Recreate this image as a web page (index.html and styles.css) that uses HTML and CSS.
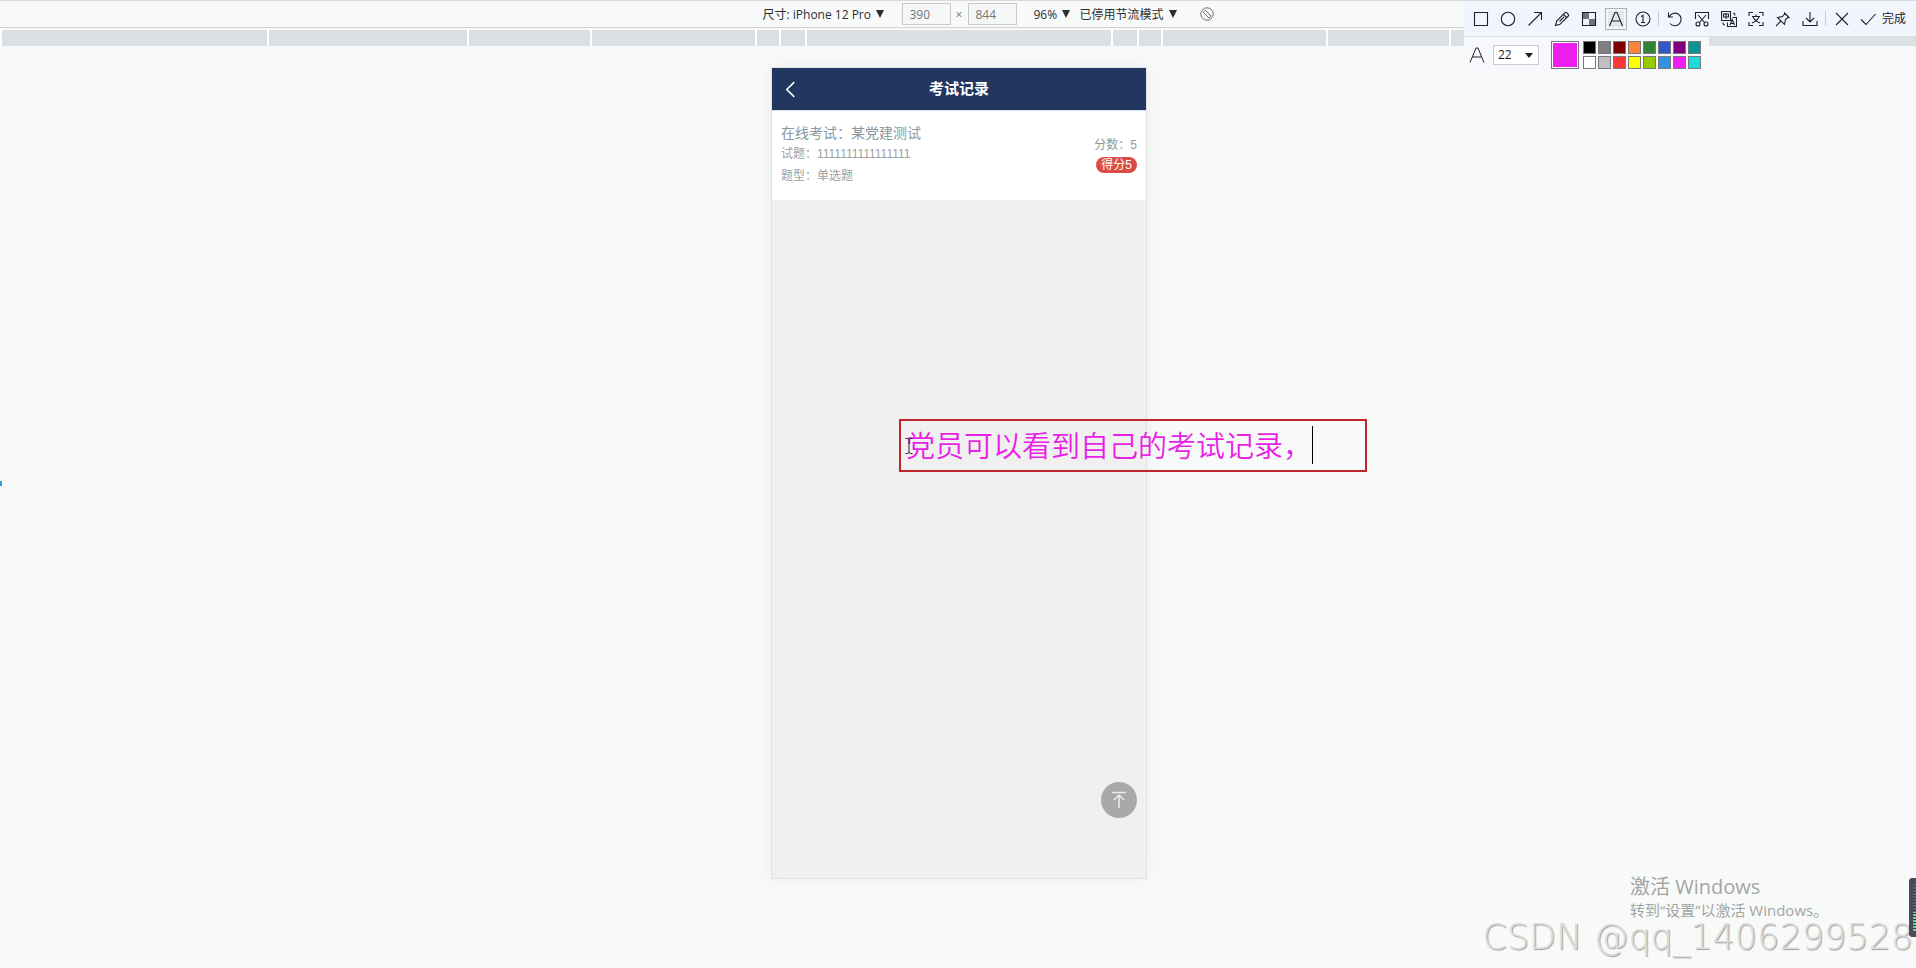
FILE: index.html
```html
<!DOCTYPE html>
<html lang="zh-CN">
<head>
<meta charset="utf-8">
<title>考试记录</title>
<link rel="stylesheet" href="styles.css">
</head>
<body>
<header class="device-bar">
  <label class="picker"><select aria-label="尺寸"><option>尺寸: iPhone 12 Pro</option></select><svg class="caret" viewBox="0 0 8 8"><path d="M0 0h8L4 8z"/></svg></label>
  <div class="dims">
    <input class="dim" type="text" value="390" aria-label="宽度">
    <span class="times">×</span>
    <input class="dim" type="text" value="844" aria-label="高度">
  </div>
  <label class="picker"><select aria-label="缩放"><option>96%</option></select><svg class="caret" viewBox="0 0 8 8"><path d="M0 0h8L4 8z"/></svg></label>
  <label class="picker picker-throttle"><select aria-label="节流"><option>已停用节流模式</option></select><svg class="caret" viewBox="0 0 8 8"><path d="M0 0h8L4 8z"/></svg></label>
  <button class="rotate" aria-label="旋转"><svg viewBox="0 0 14 14"><circle cx="7" cy="7" r="6.2"/><path d="M3.2 5.2L9 11M5.2 3.2L11 9M3.2 5.2l2-2M9 11l2-2"/></svg></button>
</header>
<div class="ruler">
  <i class="seg seg-edge"></i><i class="seg seg-xl"></i><i class="seg seg-l"></i><i class="seg seg-m"></i><i class="seg seg-xs"></i><i class="seg seg-s"></i><i class="seg seg-center"></i><i class="seg seg-s"></i><i class="seg seg-xs"></i><i class="seg seg-m"></i><i class="seg seg-l"></i><i class="seg seg-xl"></i><i class="seg seg-edge"></i>
</div>

<main class="stage">
  <section class="phone">
    <nav class="phone-nav">
      <button class="back" aria-label="返回"><svg viewBox="0 0 10 16"><path d="M9 1L2 8l7 7"/></svg></button>
      <h1 class="phone-title">考试记录</h1>
    </nav>
    <article class="record">
      <div class="record-info">
        <h2 class="record-title">在线考试：某党建测试</h2>
        <p class="record-line">试题：1111111111111111</p>
        <p class="record-line">题型：单选题</p>
      </div>
      <div class="record-score">
        <span class="score-total">分数：5</span>
        <span class="badge">得分5</span>
      </div>
    </article>
    <button class="to-top" aria-label="回到顶部"><svg viewBox="0 0 16 18"><path d="M1 1.5h14M8 17V4M3 9l5-5 5 5"/></svg></button>
  </section>
</main>

<div class="annotation">
  <input class="annotation-text" type="text" value="党员可以看到自己的考试记录，" aria-label="标注文字">
  <span class="text-cursor"></span>
  <svg class="ibeam" viewBox="0 0 8 16"><path d="M.5.5h2l1.500 1 1.500-1h2M4 1.500v13M.5 15.500h2l1.500-1 1.500 1h2"/></svg>
</div>

<aside class="snip">
  <div class="snip-main">
    <button class="tool" aria-label="矩形"><svg viewBox="0 0 16 16"><path d="M1.500 1.500h13v13h-13z"/></svg></button>
    <button class="tool" aria-label="椭圆"><svg viewBox="0 0 16 16"><circle cx="8" cy="8" r="6.700"/></svg></button>
    <button class="tool" aria-label="箭头"><svg viewBox="0 0 16 16"><path d="M1.500 14.500l13-13M7 1.500h7.500V9"/></svg></button>
    <button class="tool" aria-label="画笔"><svg viewBox="0 0 16 16"><path d="M1.500 14.500l1.200-4.500L11 1.700q.8-.8 1.600 0l1.700 1.700q.8.800 0 1.600L6 13.300zM9.500 3.500l3 3M5.500 10.500l4.500-4.500"/></svg></button>
    <button class="tool" aria-label="马赛克"><svg viewBox="0 0 16 16"><path d="M1.500 1.500h13v13h-13z"/><path class="mosaic" d="M2 2h6v6H2zM8 8h6v6H8z"/></svg></button>
    <button class="tool tool-on" aria-label="文字"><svg viewBox="0 0 16 16"><path d="M1.500 15L7 1.500h2L14.500 15M4 10h8"/></svg></button>
    <button class="tool" aria-label="序号"><svg viewBox="0 0 16 16"><circle cx="8" cy="8" r="7"/><path d="M6 5.500l2-1V11M6 11.500h4"/></svg></button>
    <i class="divider"></i>
    <button class="tool" aria-label="撤销"><svg viewBox="0 0 16 16"><path d="M1.500 1.500V6H6M2 6a6.300 6.300 0 1 1 1 6.500"/></svg></button>
    <button class="tool" aria-label="裁剪"><svg viewBox="0 0 16 16"><path d="M1.500 8V1.500h13V8M4 4l7 8M12 4l-7 8"/><circle cx="4" cy="13" r="2"/><circle cx="12" cy="13" r="2"/></svg></button>
    <button class="tool" aria-label="翻译"><svg viewBox="0 0 16 16"><path d="M.5.500h9v9h-9zM2.500 3h5v3h-5zM5 2v6M11.500 6.500h4v9h-9v-4M9 14l2.200-5.500L13.500 14M9.800 12.500h3M12 2q2 0 2 2.500M4 14q-2 0-2-2.500"/></svg></button>
    <button class="tool" aria-label="文字识别"><svg viewBox="0 0 16 16"><path d="M1 5V1.500h4M11 1.500h4V5M15 11v3.500h-4M5 14.500H1V11M4 5.500h8M8 3.500v2M5 6q2 4 7 6M11 6q-2 4-7 6"/></svg></button>
    <button class="tool" aria-label="钉住"><svg viewBox="0 0 16 16"><path d="M9 1.500l5.500 5.500M10 2.500L7.500 5.500 2.500 6.500l7 7L10.500 8.500l3-2.500M6 10l-5 5"/></svg></button>
    <button class="tool" aria-label="保存"><svg viewBox="0 0 16 16"><path d="M1 10v4.500h14V10M8 1v10M4 7l4 4 4-4"/></svg></button>
    <i class="divider"></i>
    <button class="tool" aria-label="关闭"><svg viewBox="0 0 16 16"><path d="M2 2l12 12M14 2L2 14"/></svg></button>
    <button class="tool tool-done"><svg viewBox="0 0 16 16"><path d="M1 8.500l5 5L15.500 3"/></svg>完成</button>
  </div>
  <div class="snip-options">
    <svg class="font-mark" viewBox="0 0 16 16"><path d="M1 15.500L7 1h2l6 14.500M3.500 10h9"/></svg>
    <label class="size-picker"><select aria-label="字号"><option>22</option></select><svg class="caret" viewBox="0 0 8 5"><path d="M0 0h8L4 5z"/></svg></label>
    <button class="current-color" aria-label="当前颜色"></button>
    <div class="palette">
      <button class="swatch black" aria-label="黑"></button><button class="swatch gray" aria-label="灰"></button><button class="swatch maroon" aria-label="深红"></button><button class="swatch orange" aria-label="橙"></button><button class="swatch green" aria-label="绿"></button><button class="swatch blue" aria-label="蓝"></button><button class="swatch purple" aria-label="紫"></button><button class="swatch teal" aria-label="青"></button>
      <button class="swatch white" aria-label="白"></button><button class="swatch silver" aria-label="银"></button><button class="swatch red" aria-label="红"></button><button class="swatch yellow" aria-label="黄"></button><button class="swatch lime" aria-label="黄绿"></button><button class="swatch sky" aria-label="天蓝"></button><button class="swatch magenta" aria-label="品红"></button><button class="swatch cyan" aria-label="青蓝"></button>
    </div>
  </div>
</aside>

<i class="edge-mark"></i>
<div class="activate">
  <p class="activate-title">激活 Windows</p>
  <p class="activate-text">转到“设置”以激活 Windows。</p>
</div>
<div class="watermark">CSDN @qq_1406299528</div>
<i class="meter"></i>
</body>
</html>
```
FILE: styles.css
```css
* { box-sizing: border-box; }

body {
  margin: 0;
  min-height: 100vh;
  position: relative;
  overflow: hidden;
  background: #f8faf9;
  color: #2b2e31;
  font: 12px/16px "Open Sans", "Noto Sans CJK SC", sans-serif;
}

h1, h2, p { margin: 0; font-weight: 400; }
button, input, select { font: inherit; color: inherit; margin: 0; padding: 0; border: 0; background: none; border-radius: 0; }
select { appearance: none; }
svg { display: block; fill: none; stroke: currentColor; }

/* device toolbar */
.device-bar {
  display: flex;
  align-items: center;
  justify-content: center;
  height: 28px;
  padding-left: 60px;
  border-top: 1px solid #d9dbdb;
  border-bottom: 1px solid #cfd1d2;
}
.picker { display: flex; align-items: center; gap: 4px; }
.picker select { height: 18px; padding-top: 2px; }
.caret { width: 8px; height: 8px; fill: currentColor; stroke: none; pointer-events: none; }
.dims { display: flex; align-items: center; gap: 4px; margin: 0 17px 0 18px; }
.dim { width: 49px; height: 22px; padding: 0 7px; border: 1px solid #c9cbcb; background: #f5f6f6; color: #737678; }
.times { width: 9px; padding-top: 2px; text-align: center; color: #737678; }
.picker-throttle { margin-left: 10px; }
.rotate { margin-left: 23px; color: #6c6f71; }
.rotate svg { width: 14px; height: 14px; }

.ruler { display: flex; gap: 2px; height: 18px; padding: 2px 0 0 2px; background: linear-gradient(#f8faf9 2px, #fff 2px); }
.seg { background: #dde0e3; }
.seg-edge { flex: 1; }
.seg-xl { width: 198px; }
.seg-l { width: 121px; }
.seg-m { width: 163px; }
.seg-s { width: 24px; }
.seg-xs { width: 22px; }
.seg-center { width: 304px; }

/* phone */
.stage { display: flex; justify-content: center; padding: 22px 0 0 2px; }
.phone {
  position: relative;
  width: 374px;
  aspect-ratio: 390 / 845;
  background: #f0f0f0;
  outline: 1px solid #e2e3e3;
  box-shadow: 0 0 18px rgba(0, 0, 0, .06);
  font-family: "Liberation Sans", "Noto Sans CJK SC", sans-serif;
}
.phone-nav {
  display: grid;
  grid-template-columns: 24px 1fr 24px;
  align-items: center;
  height: 42px;
  padding: 0 12px;
  background: #21375f;
  color: #fff;
}
.back svg { width: 12px; height: 17px; stroke-width: 1.5; }
.phone-title { font-size: 15px; line-height: 20px; font-weight: 700; text-align: center; }
.record {
  display: flex;
  justify-content: space-between;
  align-items: center;
  padding: 12px 9px 13px;
  background: #fff;
  border-top: 1px solid #d5e2ee;
}
.record-title { font-size: 14px; line-height: 20px; color: #89969e; }
.record-line { line-height: 22px; color: #a0a0a0; }
.record-score { display: flex; flex-direction: column; align-items: flex-end; gap: 4px; color: #8d989f; }
.badge { padding: 0 5px; border-radius: 8px; background: #dc4b44; color: #fff; }
.to-top {
  position: absolute;
  right: 9px;
  bottom: 60px;
  display: grid;
  place-items: center;
  width: 36px;
  height: 36px;
  border-radius: 50%;
  background: #a9a9a9;
  color: #ececec;
}
.to-top svg { width: 16px; height: 18px; stroke-width: 1.5; }

/* text annotation */
.annotation {
  position: absolute;
  left: 899px;
  top: 419px;
  display: flex;
  align-items: flex-start;
  width: 468px;
  height: 53px;
  padding: 1px 5px;
  border: 2px solid #c0242b;
}
.annotation-text { width: 100%; font: 350 29px/44px "Noto Sans CJK SC", sans-serif; color: #e91fe6; }
.text-cursor { position: absolute; left: 411px; top: 5px; width: 1px; height: 38px; background: #000; }
.ibeam { position: absolute; left: 4px; top: 17px; width: 8px; height: 16px; color: #222; }

/* capture toolbar */
.snip { position: absolute; top: 1px; right: 0; width: 452px; color: #1d2129; }
.snip-main { display: flex; align-items: center; height: 35px; padding-left: 3px; background: #f2f5fc; }
.tool { display: grid; place-items: center; width: 27px; height: 22px; }
.tool svg { width: 16px; height: 16px; stroke-width: 1.1; }
.tool-on svg { background: #e4e7ec; outline: 1px solid #aeb2b9; outline-offset: 2px; }
.tool .mosaic { fill: #6e727b; stroke: none; }
.tool-done { display: flex; align-items: center; gap: 6px; width: auto; padding-left: 5px; }
.divider { width: 1px; height: 15px; margin: 0 2px; background: #c6cad2; }
.snip-options {
  display: flex;
  align-items: center;
  width: 245px;
  height: 37px;
  padding-left: 5px;
  border-top: 1px solid #dfe2ea;
  background: #f6f8fc;
}
.font-mark { width: 16px; height: 16px; }
.size-picker { display: flex; align-items: center; justify-content: space-between; width: 46px; height: 20px; margin-left: 8px; padding: 0 5px 0 4px; border: 1px solid #c9ccd2; background: #fff; }
.size-picker .caret { height: 5px; }
.current-color { width: 28px; height: 28px; margin: 0 4px 0 12px; border: 1px solid #73777c; background: #ee1fee; box-shadow: inset 0 0 0 1px #fff; }
.palette { display: grid; grid-template-columns: repeat(8, 13px); gap: 2px; }
.swatch { width: 13px; height: 13px; border: 1px solid #77797c; }
.black { background: #000; } .gray { background: #808080; } .maroon { background: #800000; } .orange { background: #fb8534; }
.green { background: #318435; } .blue { background: #3058cc; } .purple { background: #800080; } .teal { background: #099595; }
.white { background: #fff; } .silver { background: #c0c0c0; } .red { background: #fa3838; } .yellow { background: #ff0; }
.lime { background: #98ca00; } .sky { background: #3292e3; } .magenta { background: #ee1fee; } .cyan { background: #1bdcdc; }

/* desktop overlays */
.edge-mark { position: absolute; left: 0; top: 481px; width: 2px; height: 5px; background: #2ba3c9; }
.activate { position: absolute; left: 1630px; bottom: 48px; color: #a3a5a5; }
.activate-title { font-size: 20px; line-height: 26px; }
.activate-text { font-size: 15px; line-height: 20px; }
.meter {
  position: absolute;
  right: 0;
  bottom: 31px;
  width: 7px;
  height: 59px;
  border: solid #464a5a;
  border-width: 6px 0 6px 4px;
  border-radius: 4px 0 0 4px;
  background: repeating-linear-gradient(transparent 0 2px, #343848 2px 3px), linear-gradient(#5b5f70 60%, #63d98b 60%);
}
.watermark {
  position: absolute;
  right: 3px;
  bottom: 10px;
  font: 200 35px/42px "DejaVu Sans", sans-serif;
  color: #dcdddd;
  text-shadow: 1px 1px 1px #9b9d9d;
}
```
